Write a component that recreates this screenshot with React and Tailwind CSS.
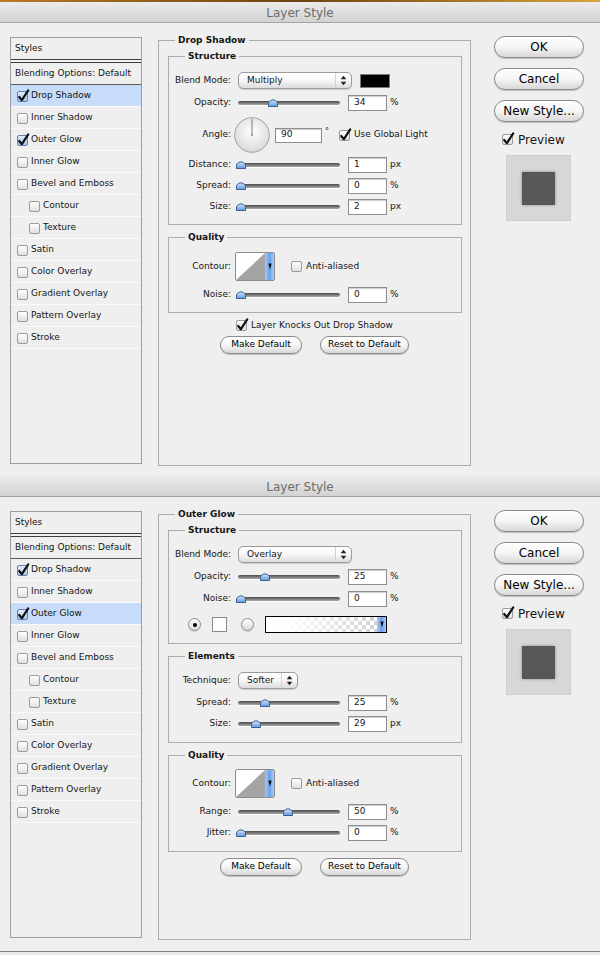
import React from "react";

const styleItems = [
  { name: "Drop Shadow", checked: true },
  { name: "Inner Shadow" },
  { name: "Outer Glow", checked: true },
  { name: "Inner Glow" },
  { name: "Bevel and Emboss" },
  { name: "Contour", nested: true },
  { name: "Texture", nested: true },
  { name: "Satin" },
  { name: "Color Overlay" },
  { name: "Gradient Overlay" },
  { name: "Pattern Overlay" },
  { name: "Stroke" },
];

function Check({ checked, blue }) {
  const box =
    blue && checked
      ? "border-[#6583b0] bg-gradient-to-b from-[#e3eefc] to-[#a9c7ee]"
      : "border-[#9a9a9a] bg-gradient-to-b from-white to-[#e0e0e0]";
  return (
    <span className={`relative inline-block w-[11px] h-[11px] shrink-0 rounded-[2px] border ${box}`}>
      {checked && (
        <svg className="absolute -left-[1px] -top-[3px]" width="13" height="14" viewBox="0 0 13 14">
          <path d="M2.2 8 L4.9 11.2 L11.2 1.4" fill="none" stroke="#111" strokeWidth="2.2" strokeLinecap="round" strokeLinejoin="round" />
        </svg>
      )}
    </span>
  );
}

function Thumb() {
  return (
    <svg width="10" height="9" viewBox="0 0 10 9">
      <defs>
        <linearGradient id="thumbg" x1="0" y1="0" x2="0" y2="1">
          <stop offset="0" stopColor="#d6e6fb" />
          <stop offset="1" stopColor="#5f97e2" />
        </linearGradient>
      </defs>
      <path d="M0.5 4.2 Q5 -0.6 9.5 4.2 L9.5 8.5 L0.5 8.5 Z" fill="url(#thumbg)" stroke="#3e5f8f" strokeWidth="1" />
    </svg>
  );
}

function Slider({ pos }) {
  return (
    <div className="relative w-[102px] h-[16px] flex items-center">
      <div className="w-full h-[4px] rounded-full bg-gradient-to-b from-[#4c4c4c] to-[#a9a9a9] shadow-[0_1px_0_#ffffff]" />
      <span className="absolute top-[3px] flex" style={{ left: pos }}>
        <Thumb />
      </span>
    </div>
  );
}

function Field({ value, className = "w-[39px] h-[16px]" }) {
  return (
    <span className={`flex items-center pl-[5px] bg-white border border-[#8e8e8e] shadow-[inset_0_1px_1px_rgba(0,0,0,0.2)] ${className}`}>
      {value}
    </span>
  );
}

function SliderRow({ label, pos, value, unit, className = "" }) {
  return (
    <div className={`flex items-center h-[16px] ${className}`}>
      <span className="w-[62px] text-right">{label}</span>
      <span className="ml-[7px]">
        <Slider pos={pos} />
      </span>
      <span className="ml-[8px]">
        <Field value={value} />
      </span>
      <span className="ml-[3px]">{unit}</span>
    </div>
  );
}

function Arrows() {
  return (
    <svg width="7" height="11" viewBox="0 0 7 11">
      <path d="M3.5 0.8 L6.3 4.3 H0.7 Z" fill="#222" />
      <path d="M3.5 10.2 L6.3 6.7 H0.7 Z" fill="#222" />
    </svg>
  );
}

function Select({ text, className }) {
  return (
    <div className={`flex items-center h-[17px] rounded-[5px] border border-[#9b9b9b] bg-gradient-to-b from-white via-[#f7f7f7] to-[#dcdcdc] shadow-[0_1px_1px_rgba(0,0,0,0.15)] ${className}`}>
      <span className="flex-1 pl-[8px]">{text}</span>
      <span className="h-full w-[16px] border-l border-[#d2d2d2] flex items-center justify-center">
        <Arrows />
      </span>
    </div>
  );
}

function BlueDrop() {
  return (
    <span className="w-[9px] h-full flex items-center justify-center bg-gradient-to-r from-[#a6c9f6] via-[#6aa1ec] to-[#a9cbf7]">
      <svg width="4" height="7" viewBox="0 0 4 7">
        <path d="M0.3 0.5 H3.7 L2 6.5 Z" fill="#111" />
      </svg>
    </span>
  );
}

function ContourBox() {
  return (
    <span className="flex w-[40px] h-[29px] border border-[#8c8c8c] rounded-[2px] overflow-hidden">
      <svg width="29" height="27" viewBox="0 0 29 27" className="bg-white">
        <polygon points="0,27 29,0 29,27" fill="#a4a4a4" />
      </svg>
      <BlueDrop />
    </span>
  );
}

function Dial() {
  return (
    <svg width="36" height="36" viewBox="0 0 36 36">
      <defs>
        <radialGradient id="dialg" cx="50%" cy="40%" r="60%">
          <stop offset="0" stopColor="#ffffff" />
          <stop offset="1" stopColor="#d9d9d9" />
        </radialGradient>
      </defs>
      <circle cx="18" cy="18" r="17.3" fill="url(#dialg)" stroke="#a0a0a0" strokeWidth="1" />
      <line x1="18" y1="18" x2="18" y2="2" stroke="#7a7a7a" strokeWidth="1" />
      <circle cx="18" cy="18" r="1" fill="#8a8a8a" />
    </svg>
  );
}

function Radio({ on }) {
  return (
    <span className="w-[13px] h-[13px] rounded-full border border-[#8f8f8f] bg-gradient-to-b from-white to-[#dadada] shadow-[0_1px_1px_rgba(0,0,0,0.15)] flex items-center justify-center">
      {on && <span className="w-[4px] h-[4px] rounded-full bg-black" />}
    </span>
  );
}

function GradientSwatch() {
  return (
    <span className="flex w-[122px] h-[17px] border border-black">
      <svg width="111" height="15" viewBox="0 0 111 15">
        <defs>
          <pattern id="chk" width="8" height="8" patternUnits="userSpaceOnUse">
            <rect width="8" height="8" fill="#ffffff" />
            <rect width="4" height="4" fill="#d2d2d2" />
            <rect x="4" y="4" width="4" height="4" fill="#d2d2d2" />
          </pattern>
          <linearGradient id="fade" x1="0" y1="0" x2="1" y2="0">
            <stop offset="0" stopColor="#fff" stopOpacity="1" />
            <stop offset="0.25" stopColor="#fff" stopOpacity="0.9" />
            <stop offset="1" stopColor="#fff" stopOpacity="0" />
          </linearGradient>
        </defs>
        <rect width="111" height="15" fill="url(#chk)" />
        <rect width="111" height="15" fill="url(#fade)" />
      </svg>
      <BlueDrop />
    </span>
  );
}

function Group({ title, className = "", children }) {
  return (
    <fieldset className={`border border-[#acacac] ${className}`}>
      <legend className="ml-[16px] px-[3px] font-bold leading-[12px]">{title}</legend>
      {children}
    </fieldset>
  );
}

function Pill({ children, className = "" }) {
  return (
    <button className={`flex items-center justify-center rounded-full border border-[#8a8a8a] bg-gradient-to-b from-white via-[#f5f5f5] to-[#d8d8d8] shadow-[0_1px_1px_rgba(0,0,0,0.2)] text-black ${className}`}>
      {children}
    </button>
  );
}

function BottomButtons({ className = "" }) {
  return (
    <div className={`flex justify-center gap-[18px] ${className}`}>
      <Pill className="w-[82px] h-[18px]">Make Default</Pill>
      <Pill className="w-[89px] h-[18px]">Reset to Default</Pill>
    </div>
  );
}

function StylesList({ active }) {
  return (
    <div className="w-[132px] h-[427px] mt-[14px] border border-[#9d9d9d] flex flex-col">
      <div className="h-[25px] pl-[4px] pt-[1px] flex items-center border-b-[4px] border-double border-[#3e3e3e]">Styles</div>
      <div className="h-[22px] pl-[4px] pt-[1px] flex items-center border-b border-[#5a5a5a]">Blending Options: Default</div>
      {styleItems.map((item) => (
        <div
          key={item.name}
          className={`h-[22px] pt-[1px] flex items-center gap-[3px] border-b border-[#fafafa] ${item.nested ? "pl-[18px]" : "pl-[6px]"} ${item.name === active ? "bg-[#c6dcf8]" : ""}`}
        >
          <Check checked={item.checked} blue />
          <span>{item.name}</span>
        </div>
      ))}
    </div>
  );
}

function RightColumn() {
  return (
    <div className="w-[90px] mt-[13px] flex flex-col">
      <Pill className="h-[22px] text-[12px]">OK</Pill>
      <Pill className="h-[22px] text-[12px] mt-[10px]">Cancel</Pill>
      <Pill className="h-[22px] text-[12px] mt-[10px]">New Style...</Pill>
      <div className="mt-[10px] h-[15px] pl-[8px] flex items-center gap-[5px] text-[12px]">
        <Check checked />
        <span>Preview</span>
      </div>
      <div className="mt-[8px] ml-[12px] w-[65px] h-[66px] bg-[#d7d7d7] border border-[#cfcfcf] flex items-center justify-center">
        <div className="w-[33px] h-[33px] bg-[#575757] shadow-[0_0_3px_rgba(0,0,0,0.35)]" />
      </div>
    </div>
  );
}

function Dialog({ active, top, bodyClass, children }) {
  return (
    <div className="flex flex-col">
      <div className="h-[23px] flex flex-col border-b border-[#a3a3a3] bg-gradient-to-b from-[#eeeeee] to-[#d2d2d2]">
        {top && <div className="h-[2px] bg-gradient-to-r from-[#b87a26] via-[#6e4310] to-[#d9a43c]" />}
        <div className={`flex-1 flex items-center justify-center text-[12px] text-[#6d6d6d] ${top ? "pt-[1px]" : "pt-[3px]"}`}>Layer Style</div>
      </div>
      <div className={`flex items-start pl-[10px] bg-[#efefef] ${bodyClass}`}>
        <StylesList active={active} />
        <Group title={active} className="ml-[16px] mt-[11px] w-[313px] h-[432px]">
          {children}
        </Group>
        <div className="ml-[23px]">
          <RightColumn />
        </div>
      </div>
    </div>
  );
}

export default function App() {
  return (
    <div className="w-[600px] h-[955px] overflow-hidden bg-[#e9e9e9] text-[9px] text-[#151515] font-['DejaVu_Sans',sans-serif]">
      <Dialog active="Drop Shadow" top bodyClass="h-[451px]">
        <div className="flex flex-col">
          <Group title="Structure" className="ml-[9px] mt-[4px] w-[294px] pb-[9px]">
            <div className="mt-[10px] flex items-center h-[17px]">
              <span className="w-[62px] text-right">Blend Mode:</span>
              <Select text="Multiply" className="ml-[7px] w-[114px]" />
              <span className="ml-[8px] w-[30px] h-[14px] bg-black border border-[#7a7a7a]" />
            </div>
            <SliderRow label="Opacity:" pos={30} value="34" unit="%" className="mt-[6px]" />
            <div className="mt-[6px] flex items-center h-[36px]">
              <span className="w-[62px] text-right">Angle:</span>
              <span className="ml-[3px] flex">
                <Dial />
              </span>
              <span className="ml-[5px]">
                <Field value="90" className="w-[47px] h-[15px]" />
              </span>
              <span className="ml-[3px] self-start mt-[9px] text-[8px]">°</span>
              <span className="ml-[10px] flex items-center gap-[4px]">
                <Check checked />
                <span>Use Global Light</span>
              </span>
            </div>
            <SliderRow label="Distance:" pos={-2} value="1" unit="px" className="mt-[4px]" />
            <SliderRow label="Spread:" pos={-2} value="0" unit="%" className="mt-[5px]" />
            <SliderRow label="Size:" pos={-2} value="2" unit="px" className="mt-[5px]" />
          </Group>
          <Group title="Quality" className="ml-[9px] mt-[6px] w-[294px] pb-[9px]">
            <div className="mt-[9px] flex items-center h-[29px]">
              <span className="w-[62px] text-right">Contour:</span>
              <span className="ml-[4px]">
                <ContourBox />
              </span>
              <span className="ml-[16px] flex items-center gap-[4px]">
                <Check />
                <span>Anti-aliased</span>
              </span>
            </div>
            <SliderRow label="Noise:" pos={-2} value="0" unit="%" className="mt-[6px]" />
          </Group>
          <div className="mt-[6px] h-[13px] flex items-center justify-center gap-[4px]">
            <Check checked />
            <span>Layer Knocks Out Drop Shadow</span>
          </div>
          <BottomButtons className="mt-[4px]" />
        </div>
      </Dialog>
      <Dialog active="Outer Glow" bodyClass="h-[455px] border-b border-[#7c7c7c]">
        <div className="flex flex-col">
          <Group title="Structure" className="ml-[9px] mt-[4px] w-[294px] pb-[10px]">
            <div className="mt-[10px] flex items-center h-[17px]">
              <span className="w-[62px] text-right">Blend Mode:</span>
              <Select text="Overlay" className="ml-[7px] w-[114px]" />
            </div>
            <SliderRow label="Opacity:" pos={22} value="25" unit="%" className="mt-[6px]" />
            <SliderRow label="Noise:" pos={-2} value="0" unit="%" className="mt-[6px]" />
            <div className="mt-[9px] h-[17px] pl-[19px] flex items-center">
              <Radio on />
              <span className="ml-[11px] w-[15px] h-[15px] bg-white border border-[#8a8a8a]" />
              <span className="ml-[14px]">
                <Radio />
              </span>
              <span className="ml-[11px]">
                <GradientSwatch />
              </span>
            </div>
          </Group>
          <Group title="Elements" className="ml-[9px] mt-[6px] w-[294px] pb-[10px]">
            <div className="mt-[10px] flex items-center h-[17px]">
              <span className="w-[62px] text-right">Technique:</span>
              <Select text="Softer" className="ml-[7px] w-[60px]" />
            </div>
            <SliderRow label="Spread:" pos={22} value="25" unit="%" className="mt-[6px]" />
            <SliderRow label="Size:" pos={13} value="29" unit="px" className="mt-[5px]" />
          </Group>
          <Group title="Quality" className="ml-[9px] mt-[6px] w-[294px] pb-[10px]">
            <div className="mt-[8px] flex items-center h-[29px]">
              <span className="w-[62px] text-right">Contour:</span>
              <span className="ml-[4px]">
                <ContourBox />
              </span>
              <span className="ml-[16px] flex items-center gap-[4px]">
                <Check />
                <span>Anti-aliased</span>
              </span>
            </div>
            <SliderRow label="Range:" pos={45} value="50" unit="%" className="mt-[6px]" />
            <SliderRow label="Jitter:" pos={-2} value="0" unit="%" className="mt-[5px]" />
          </Group>
          <BottomButtons className="mt-[6px]" />
        </div>
      </Dialog>
    </div>
  );
}
